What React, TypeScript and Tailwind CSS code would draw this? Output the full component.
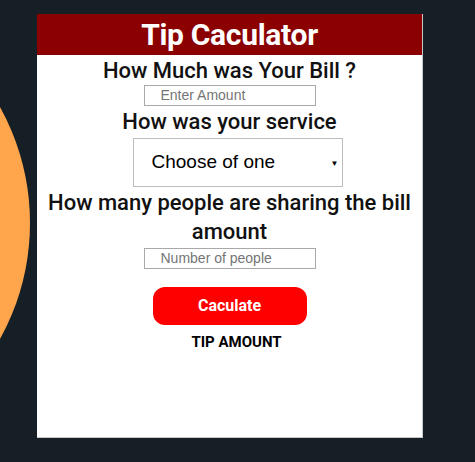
export default function App() {
  return (
    <div className="relative w-[475px] h-[462px] overflow-hidden bg-[#161f26]">
      {/* orange blob behind the card */}
      <div className="absolute left-[-448px] top-[-16px] w-[478px] h-[478px] rounded-full bg-[#ffa64d]" />

      <div className="relative ml-[37px] pt-[14px]">
        <div className="w-[386px] h-[424px] bg-white border-r border-b border-[#c8c8c8] flex flex-col items-center">
          <div className="w-full h-[41px] bg-[#8b0000] flex items-center justify-center">
            <h1 className="text-white text-[30px] font-bold leading-none font-['Roboto',sans-serif] tracking-[-0.3px]">
              Tip Caculator
            </h1>
          </div>

          <p className="mt-[2px] h-[28px] leading-[28px] text-[22px] font-medium text-[#111] font-['Roboto',sans-serif]">
            How Much was Your Bill ?
          </p>
          <input
            type="text"
            placeholder="Enter Amount"
            className="w-[172px] h-[21px] border border-[#a9a9a9] pl-[16px] text-[14px] font-['Liberation_Sans',Arial,sans-serif] placeholder:text-[#757575] outline-none"
          />

          <p className="mt-[2px] h-[28px] leading-[28px] text-[22px] font-medium text-[#111] font-['Roboto',sans-serif]">
            How was your service
          </p>
          <div className="mt-[2px] ml-[16px] relative w-[210px] h-[49px] border border-[#bdbdbd] flex items-center pl-[18px]">
            <span className="text-[19px] text-black font-['Liberation_Sans',Arial,sans-serif]">Choose of one</span>
            <span className="absolute right-[3px] top-[18px] text-[8px] text-black">▼</span>
          </div>

          <p className="mt-[1px] w-full text-center leading-[29px] text-[22px] font-medium text-[#111] font-['Roboto',sans-serif]">
            How many people are sharing the bill amount
          </p>
          <input
            type="text"
            placeholder="Number of people"
            className="mt-[2px] w-[172px] h-[21px] border border-[#a9a9a9] pl-[16px] text-[14px] font-['Liberation_Sans',Arial,sans-serif] placeholder:text-[#757575] outline-none"
          />

          <button className="mt-[18px] w-[154px] h-[38px] rounded-[12px] bg-[#ff0000] text-white text-[16px] font-bold font-['Roboto',sans-serif]">
            Caculate
          </button>

          <p className="mt-[9px] ml-[14px] text-[15px] leading-[17px] font-bold text-black font-['Roboto',sans-serif]">
            TIP AMOUNT
          </p>
        </div>
      </div>
    </div>
  );
}
